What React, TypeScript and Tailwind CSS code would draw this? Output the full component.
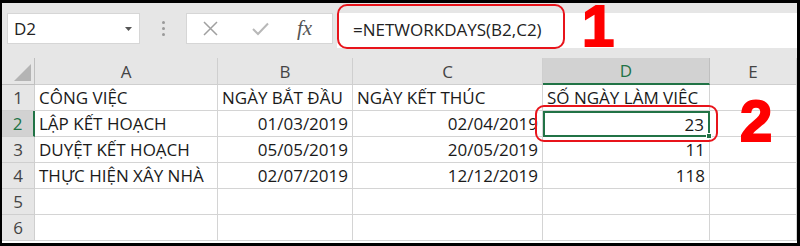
import React from "react";

const font = { fontFamily: '"Open Sans", "Liberation Sans", sans-serif' };

const cols = ["A", "B", "C", "D", "E"];

const rows: string[][] = [
  ["CÔNG VIỆC", "NGÀY BẮT ĐẦU", "NGÀY KẾT THÚC", "SỐ NGÀY LÀM VIỆC", ""],
  ["LẬP KẾT HOẠCH", "01/03/2019", "02/04/2019", "23", ""],
  ["DUYỆT KẾT HOẠCH", "05/05/2019", "20/05/2019", "11", ""],
  ["THỰC HIỆN XÂY NHÀ", "02/07/2019", "12/12/2019", "118", ""],
  ["", "", "", "", ""],
  ["", "", "", "", ""],
];

const isRight = (r: number, c: number) => r > 0 && c > 0 && c < 4;

const Toolbar: React.FC = () => (
  <div className="flex items-start pt-[10px] pl-[5px] h-[55px] bg-[#e6e6e6]">
    <div className="w-[133px] h-[31px] bg-white border border-[#d6d6d6] flex items-center justify-between pl-[6px] pr-[7px]">
      <span className="text-[17px] leading-[23px] text-[#222]">D2</span>
      <svg width="7" height="4" viewBox="0 0 7 4">
        <path d="M0 0 H7 L3.5 4 Z" fill="#555" />
      </svg>
    </div>
    <div className="w-[46px] h-[31px] flex flex-col items-center justify-center gap-[3px]">
      <span className="w-[3px] h-[3px] rounded-full bg-[#9a9a9a]" />
      <span className="w-[3px] h-[3px] rounded-full bg-[#9a9a9a]" />
      <span className="w-[3px] h-[3px] rounded-full bg-[#9a9a9a]" />
    </div>
    <div className="w-[147px] h-[31px] bg-white border border-[#d6d6d6] flex items-center pl-[15px]">
      <svg width="17" height="17" viewBox="0 0 17 17" className="mr-[33px]">
        <path d="M2 2 L15 15 M15 2 L2 15" stroke="#a0a0a0" strokeWidth="1.5" />
      </svg>
      <svg width="17" height="14" viewBox="0 0 17 14" className="mr-[28px]">
        <path d="M1 7 L6 12 L16 1.5" stroke="#b8b8b8" strokeWidth="2" fill="none" />
      </svg>
      <span
        className="text-[21px] leading-none italic text-[#555]"
        style={{ fontFamily: '"Liberation Serif", serif' }}
      >
        fx
      </span>
    </div>
    <div className="ml-[4px] flex-1 h-[35px] bg-white pl-[16px] pt-[5px]">
      <span className="text-[17px] leading-[23px] text-[#222]">=NETWORKDAYS(B2,C2)</span>
    </div>
  </div>
);

const Sheet: React.FC = () => (
  <div className="grid grid-cols-[33px_183px_135px_190px_167px_87px] grid-rows-[27px_repeat(6,26px)] bg-white">
    <div className="bg-[#e6e6e6] border-r border-b border-[#bfbfbf] flex items-end justify-end pr-[3px] pb-[3px]">
      <svg width="17" height="17" viewBox="0 0 17 17">
        <path d="M17 0 L17 17 L0 17 Z" fill="#b4b4b4" />
      </svg>
    </div>
    {cols.map((c) => (
      <div
        key={c}
        className={
          c === "D"
            ? "bg-[#d2d2d2] border-r border-[#bfbfbf] border-b-2 border-b-[#217346] flex items-center justify-center text-[17px] leading-[23px] text-[#217346]"
            : "bg-[#e6e6e6] border-r border-b border-[#cfcfcf] flex items-center justify-center text-[17px] leading-[23px] text-[#444]"
        }
      >
        {c}
      </div>
    ))}
    {rows.map((row, r) => (
      <React.Fragment key={r}>
        <div
          className={
            r === 1
              ? "bg-[#d2d2d2] border-b border-[#cfcfcf] border-r-2 border-r-[#217346] flex items-center justify-center text-[17px] leading-[23px] text-[#217346]"
              : "bg-[#e6e6e6] border-b border-r border-[#cfcfcf] flex items-center justify-center text-[17px] leading-[23px] text-[#444]"
          }
        >
          {r + 1}
        </div>
        {row.map((v, c) => {
          const selected = r === 1 && c === 3;
          return (
            <div
              key={c}
              className={
                selected
                  ? "relative border-2 border-[#217346] flex items-center justify-end pr-[4px] text-[17px] leading-[23px] text-[#1a1a1a] whitespace-nowrap"
                  : isRight(r, c)
                  ? "border-r border-b border-[#d4d4d4] flex items-center justify-end pr-[4px] text-[17px] leading-[23px] text-[#1a1a1a] whitespace-nowrap"
                  : "border-r border-b border-[#d4d4d4] flex items-center pl-[4px] text-[17px] leading-[23px] text-[#1a1a1a] whitespace-nowrap"
              }
            >
              {v}
              {selected && (
                <span className="absolute right-[-4px] bottom-[-4px] w-[6px] h-[6px] bg-[#217346] border border-white" />
              )}
            </div>
          );
        })}
      </React.Fragment>
    ))}
  </div>
);

export default function App() {
  return (
    <div
      className="relative w-[800px] h-[246px] bg-black pt-[3px] pl-[2px] pr-[3px] pb-[3px] overflow-hidden"
      style={font}
    >
      <div className="w-[795px] h-[240px] overflow-hidden bg-white">
        <Toolbar />
        <Sheet />
      </div>
      <div className="absolute left-[337px] top-[4px] w-[228px] h-[45px] border-2 border-[#e8141b] rounded-[10px]" />
      <div className="absolute left-[535px] top-[105px] w-[183px] h-[37px] border-2 border-[#e8141b] rounded-[9px]" />
      <span
        className="absolute left-[582px] top-[5px] text-[58px] leading-[42px] font-bold text-[#f00] [-webkit-text-stroke:2px_#f00]"
        style={{ fontFamily: '"Liberation Sans", sans-serif' }}
      >
        1
      </span>
      <span
        className="absolute left-[740px] top-[100px] text-[58px] leading-[42px] font-bold text-[#f00] [-webkit-text-stroke:2px_#f00]"
        style={{ fontFamily: '"Liberation Sans", sans-serif' }}
      >
        2
      </span>
    </div>
  );
}
